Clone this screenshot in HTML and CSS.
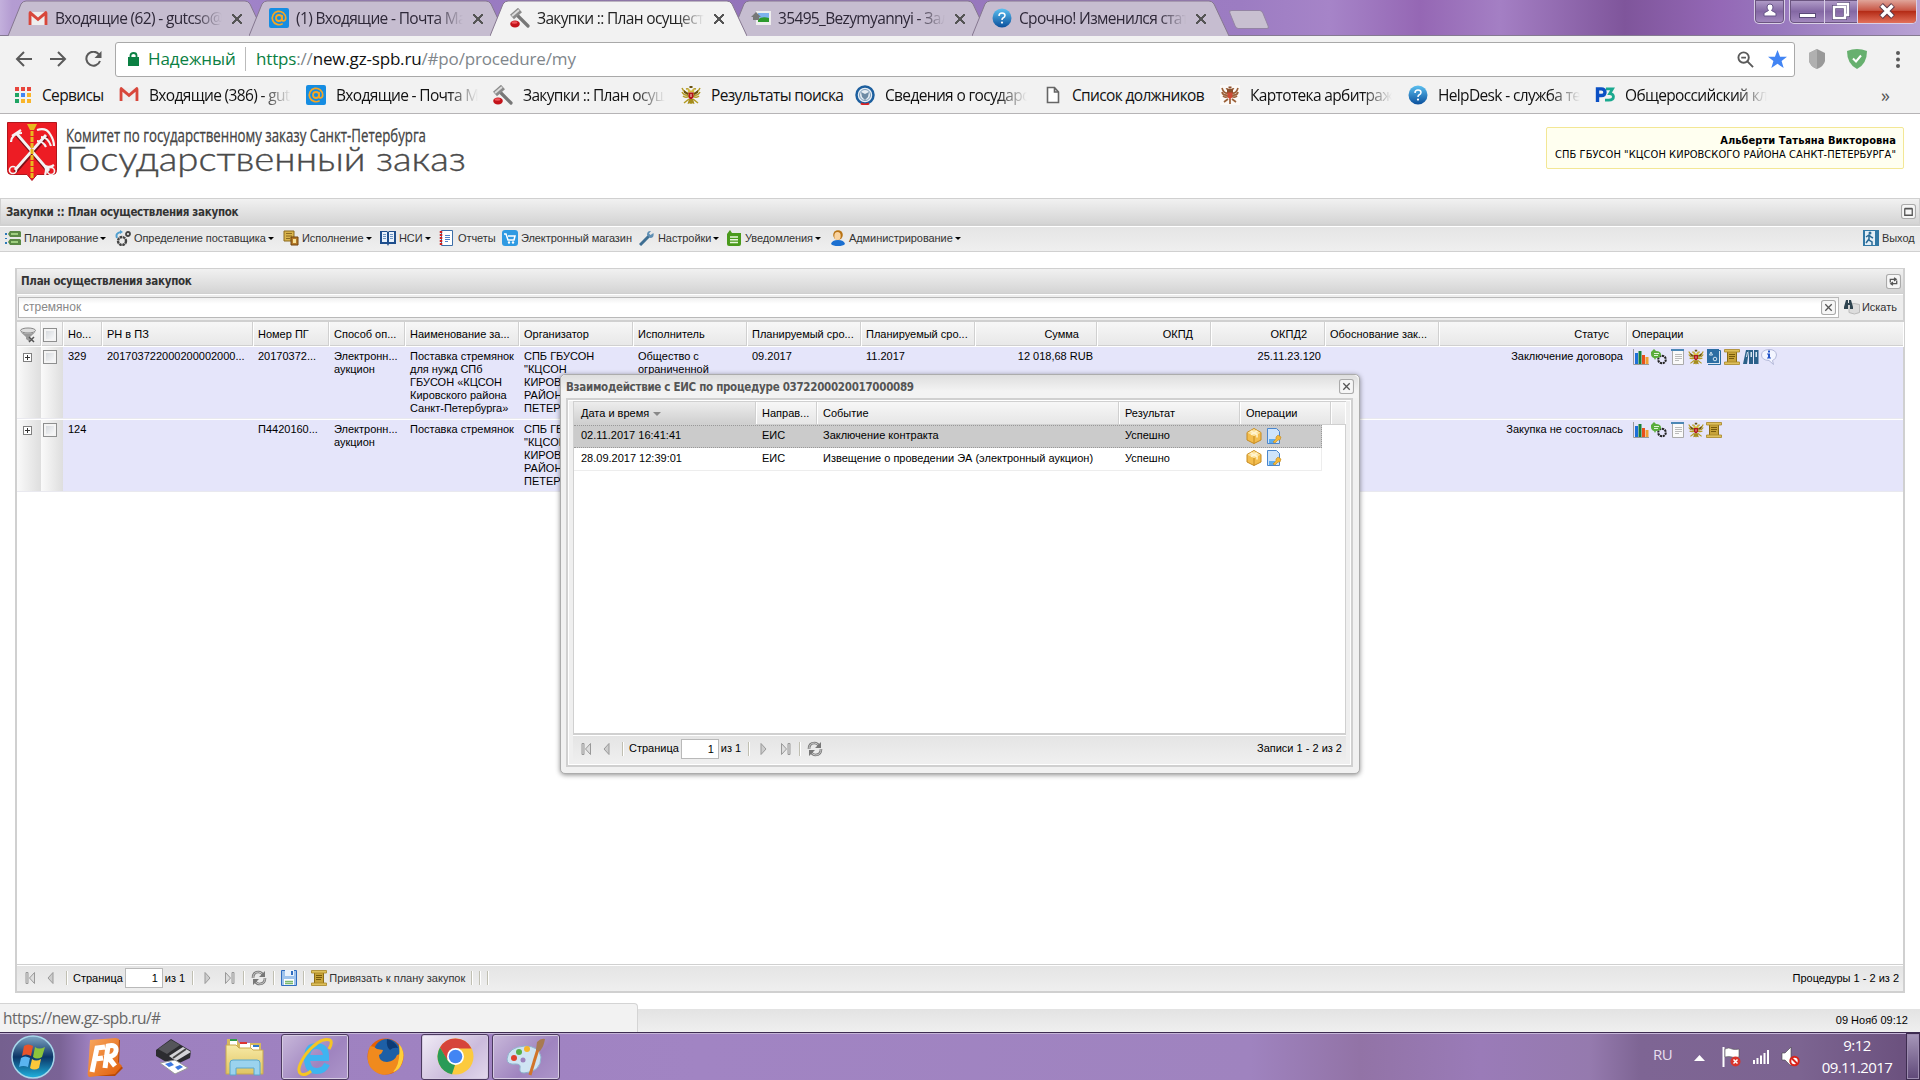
FILE: index.html
```html
<!DOCTYPE html>
<html lang="ru">
<head>
    <meta charset="UTF-8">
    <title>Закупки :: План осуществления закупок</title>
    <link rel="stylesheet" href="styles.css">
</head>
<body>
    <!-- Icon set -->
    <svg class="sprite" width="0" height="0">
        <linearGradient id="gBlue" x2="0" y2="1"><stop offset="0" stop-color="#5cc0f0"/><stop offset="1" stop-color="#0a4f9c"/></linearGradient>
        <linearGradient id="gOrb" x2="0" y2="1"><stop offset="0" stop-color="#7fa6c4"/><stop offset=".5" stop-color="#0c3566"/><stop offset="1" stop-color="#1fb4e0"/></linearGradient>
        <linearGradient id="gOrange" x2="1" y2="1"><stop offset="0" stop-color="#f8a860"/><stop offset="1" stop-color="#e05c08"/></linearGradient>
        <linearGradient id="gGold" x2="0" y2="1"><stop offset="0" stop-color="#f7eaa6"/><stop offset="1" stop-color="#e0c463"/></linearGradient>
        <symbol id="gmail" viewBox="0 0 20 16"><path fill="#eee" d="M1 1h18v14H1z"/><path fill="#d8473b" d="M0 2q0-2 2-2l8 7 8-7q2 0 2 2v13h-3V5l-7 6-7-6v10H0z"/></symbol>
        <symbol id="mailru" viewBox="0 0 20 20"><rect width="20" height="20" rx="2" fill="#168de2"/><circle cx="10" cy="10" r="3" fill="none" stroke="#f6a623" stroke-width="1.8"/><path d="M13 7v4q0 2 1.700 2 2-.5 2-3a6.700 6.700 0 1 0-3 5.600" fill="none" stroke="#f6a623" stroke-width="1.700"/></symbol>
        <symbol id="gavel" viewBox="0 0 20 20"><path d="M8 8l10 10" stroke="#777" stroke-width="3.200" stroke-linecap="round"/><path d="M2 9l8-7" stroke="#8b8b8b" stroke-width="6"/><path d="M2 8l7-6" stroke="#ddd" stroke-width="2"/><ellipse cx="5" cy="16" rx="4.800" ry="3.400" fill="#c3131a"/><ellipse cx="4.500" cy="14.500" rx="3" ry="1.200" fill="#f0555a"/></symbol>
        <symbol id="photo" viewBox="0 0 20 16"><rect x="5" y="1" width="15" height="14" fill="#eee"/><rect x="7" y="3" width="11" height="5" fill="#7db2ee"/><path d="M7 9q5-3 11-1v4H7z" fill="#2d9b2d"/><path d="M0 7l5-5 5 5H8v3H2V7z" fill="#777"/></symbol>
        <symbol id="help" viewBox="0 0 20 20"><circle cx="10" cy="10" r="9.500" fill="url(#gBlue)"/><path d="M7 8q0-3 3-3t3 2.500q0 1.500-2 2.500-1 .5-1 2" fill="none" stroke="#fff" stroke-width="1.500"/><circle cx="10" cy="14.600" r="1.100" fill="#fff"/></symbol>
        <symbol id="eagle" viewBox="0 0 20 20"><path fill="none" stroke="#b39a22" stroke-width="1.500" d="M8 8Q4 9 1 3M8 10Q3 11 1 7M8 11.500Q4 13 2 11M12 8q4 1 7-5M12 10q5 1 7-3M12 11.500q4 1.500 6-.5M8 14l-5 4M12 14l5 4M10 14v5M8 6Q8 3 5 4M12 6q0-3 3-2"/><path fill="#6b5310" d="M8.500 1h3v2h-3zM3 5l4 3v2L3 8zM17 5l-4 3v2l4-2z"/><path fill="#d4bb40" d="M6.500 3.500l3 2h1l3-2-.5 4H7z"/><path fill="#b3151b" d="M7.500 7.500h5v4.500q-1 2-2.500 2.500Q8 14 7.500 12z"/><path fill="#f0e0d0" d="M9.500 9h1v3h-1z"/><path fill="#a58c1c" d="M8 14h4l1.500 5-3.500-1-3.500 1z"/></symbol>
        <symbol id="eaglered" viewBox="0 0 20 20"><path fill="#fbf9f7" d="M0 0h20v20H0z"/><path fill="none" stroke="#9b6038" stroke-width="1.700" d="M8 8Q4 9 2 3M8 10Q3 11 2 7M8 11.500Q5 13 3 11M12 8q4 1 6-5M12 10q5 1 6-3M12 11.500q3 1.500 5-.5M8 14l-4 3M12 14l4 3M10 14v5M8 6Q8 3 6 4M12 6q0-3 2-2"/><path fill="#8c4f2c" d="M8.500 1.500h3v2h-3zM7 4h6v4H7z"/><path fill="#cf4a35" d="M7.500 7.500h5v4.500L10 14.500 7.500 12z"/></symbol>
        <symbol id="fns" viewBox="0 0 20 20"><circle cx="10" cy="10" r="8.500" fill="#e8eef4" stroke="#1d5f9e" stroke-width="2.500"/><circle cx="10" cy="10" r="5.500" fill="none" stroke="#7b9dbb"/><path d="M6 7l4 2 4-2-1 5-3 3-3-3z" fill="#6e8ba5"/><path d="M6 18.500q4 2 8 0" stroke="#d22" stroke-width="2" fill="none"/></symbol>
        <symbol id="file" viewBox="0 0 14 18"><path d="M1.500 1.500h7l4 4.500v10.500h-11zM8.500 1.500V6h4" fill="#fff" stroke="#666" stroke-width="1.600"/></symbol>
        <symbol id="rz" viewBox="0 0 20 16"><path d="M2 16V2h4q4 0 4 3.500T6 9H3" fill="none" stroke="#0b50c4" stroke-width="3.600"/><path d="M11 2h7l-3 5q4 0 4 3.500T14 14h-4" fill="none" stroke="#1aa98f" stroke-width="3"/></symbol>
        <symbol id="plan" viewBox="0 0 16 16"><path fill="#5b8a45" d="M5 1h10l1 1v5H5L3 4zM5 9h10l1 1v5H5l-2-3z"/><path fill="#9fcf80" d="M6 3h7v2H6zM6 11h7v2H6z"/><path fill="#2b79b8" d="M0 3h2v2H0zM0 8h2v1H0zM0 12h2v2H0z"/></symbol>
        <symbol id="gears" viewBox="0 0 16 16"><circle cx="7" cy="11" r="4" fill="none" stroke="#444" stroke-width="2.400" stroke-dasharray="2.600 .6"/><circle cx="13" cy="4" r="2" fill="none" stroke="#444" stroke-width="1.800"/><path d="M2 8Q0 3 6 2" fill="none" stroke="#4f9fd0" stroke-width="2"/><path d="M5 0l3 2-3 2z" fill="#4f9fd0"/></symbol>
        <symbol id="exec" viewBox="0 0 16 16"><path fill="#d9b44c" stroke="#8c6a1f" d="M1 1h10v10H1z"/><path stroke="#8c6a1f" d="M3 3.500h6M3 6h6M3 8.500h4"/><path fill="#b57a28" stroke="#70430e" d="M8 7h7v8H8z"/><path fill="#f7e29b" d="M10 9h3v4h-3z"/></symbol>
        <symbol id="book" viewBox="0 0 16 16"><path fill="#1e4e8c" d="M0 1h7l1 1 1-1h7v13H9l-1 2-1-2H0z"/><path fill="#e8f1fb" d="M2 2h5v10H2zM9 2h5v10H9z"/><path stroke="#6e95c2" d="M3 4.500h3M3 6.500h3M3 8.500h3M10 4.500h3M10 6.500h3M10 8.500h3"/></symbol>
        <symbol id="report" viewBox="0 0 16 16"><path fill="#fff" stroke="#3c6ea8" d="M2.500.5h11v15h-11z"/><path stroke="#c22" stroke-width="2.500" stroke-dasharray="2 1" d="M2 1v14"/><path stroke="#4d82c8" d="M6 5.500h5M6 7.500h5M6 9.500h5M6 11.500h3"/></symbol>
        <symbol id="cart" viewBox="0 0 16 16"><rect width="16" height="16" rx="3" fill="#2f9ae2"/><path d="M2 4h2l2 6h6l1-4H6" fill="none" stroke="#fff" stroke-width="1.500"/><circle cx="7" cy="12.500" r="1.200" fill="#fff"/><circle cx="11" cy="12.500" r="1.200" fill="#fff"/></symbol>
        <symbol id="wrench" viewBox="0 0 16 16"><path d="M1 15l9-9" stroke="#3f6f93" stroke-width="3"/><path d="M14.500 3l-3 2-1.500-1.500L12 1q-4-.5-4 4l3 3q4.500 0 3.500-5z" fill="#5f8fb4"/></symbol>
        <symbol id="note" viewBox="0 0 16 16"><path fill="#4a9a1c" d="M1 4l3-4 2 3h9v11q0 2-2 2H3q-2 0-2-2z"/><path stroke="#e9f7dd" stroke-width="1.500" d="M4 7h8M4 9.700h8M4 12.400h8"/></symbol>
        <symbol id="admin" viewBox="0 0 16 16"><path fill="#1b6fd0" d="M1 14q1-4 7-4t7 4q-2 2-7 2t-7-2z"/><circle cx="8" cy="5" r="4.800" fill="#b87315"/><ellipse cx="7.500" cy="6" rx="3.200" ry="4" fill="#f9d3a0"/></symbol>
        <symbol id="exit" viewBox="0 0 16 16"><path fill="#3278a5" d="M0 0h16v16H0z"/><path fill="#e3eef6" d="M2 1h10v14H2z"/><circle cx="7" cy="3" r="1.500" fill="#2a6a95"/><path d="M3 7l3-2 2 2 2 1M6 5v5l3 2v3M6 9l-3 4" fill="none" stroke="#2a6a95" stroke-width="1.500"/></symbol>
        <symbol id="chart" viewBox="0 0 16 16"><path stroke="#999" fill="none" d="M.5 0v15.500H16"/><path fill="#1d6fd8" d="M2 4h3v11H2z"/><path fill="#188038" d="M5.500 2h3v13h-3z"/><path fill="#e8501a" d="M9 6h3v9H9z"/><path fill="#f0a030" d="M12.500 8h3v7h-3z"/></symbol>
        <symbol id="msggear" viewBox="0 0 16 16"><circle cx="11" cy="10.500" r="3.800" fill="none" stroke="#222" stroke-width="2" stroke-dasharray="2.200 .7"/><path fill="#5aad3c" d="M0 3l3-3 2 2q5 0 5 3.500T5 9l-1 2-1-2Q0 8 0 5z"/><path d="M3 4.500h5M3 6.500h4" stroke="#dff3d5"/></symbol>
        <symbol id="doc" viewBox="0 0 16 16"><path fill="#fafafa" stroke="#aaa" d="M2.500.5h11v15h-11z"/><path stroke="#4b86b5" stroke-width="2" d="M1 1h13"/><path stroke="#bbb" d="M5 5.500h7M5 7.500h7M5 9.500h7M5 11.500h4"/></symbol>
        <symbol id="bluebook" viewBox="0 0 16 16"><path fill="#dde8f2" stroke="#2c6ea3" d="M12 1.500h2.500v14H2"/><path fill="#2c6ea3" d="M1 0h12v14H1z"/><path d="M3.500 6L5 3l1.500 3z" fill="none" stroke="#cfe2f0"/><circle cx="9" cy="10" r="1.800" fill="none" stroke="#cfe2f0"/></symbol>
        <symbol id="scroll" viewBox="0 0 16 16"><path fill="#c7a339" stroke="#8b6c14" d="M3.500 2h9v12h-9z"/><path fill="#dfc15c" stroke="#a78526" stroke-width=".8" d="M.5.500h15v2.500H.5zM.5 13h15v2.500H.5z"/><path stroke="#775a0c" d="M5 5.500h6M5 7.500h6M5 9.500h5"/></symbol>
        <symbol id="folders" viewBox="0 0 16 16"><path fill="#2b6189" d="M3 1l3 0-2 14H0zM6 1h4v14H6zM11 1h4.500v14H11z"/><path fill="#d8e8f2" d="M4 3h1L4 8H3zM7.500 3h1.500v5H7.500zM12.500 3H14v5h-1.500z"/></symbol>
        <symbol id="info" viewBox="0 0 16 16"><path fill="#f3f5ff" stroke="#b3b8d8" d="M8 .5q7 0 7.500 5.500 0 4-4 5.500l1 4-4.500-4Q.5 11 .5 6T8 .5z"/><path fill="#2455c8" d="M7 1.500h2v2H7zM6 4.500h3v4h1v1H6v-1h1v-3H6z"/></symbol>
        <symbol id="box" viewBox="0 0 16 16"><path fill="#f3bd4e" stroke="#c58a20" d="M8 .5l7 4v7.500l-7 3.500-7-3.500V4.500z"/><path fill="#fce29a" d="M8 1l6.500 3.700L8 8.200 1.500 4.700z"/><path stroke="#c58a20" d="M8 8v7.500"/><path stroke="#fff3d0" stroke-width="1.500" d="M4.500 3l6.500 3.500v3M11.500 3L5 6.500" fill="none"/></symbol>
        <symbol id="docsign" viewBox="0 0 16 16"><path fill="#cfe4fa" stroke="#4a86cc" d="M1.500.5h9l3 3v12h-12z"/><path stroke="#3a9ae8" stroke-width="1.500" d="M3 12h6M3 14h5"/><path fill="#f2b83a" stroke="#c58715" stroke-width=".6" d="M7 14l3-3V9l2-2 3 2-1 3-2 0-3 3z"/></symbol>
        <symbol id="reload" viewBox="0 0 16 16"><path d="M2 8q0-6 5.500-6 3 0 4.500 3M14 8q0 6-5.500 6-3 0-4.500-3" fill="none" stroke="#777" stroke-width="2.600"/><path d="M2 8q0-6 5.500-6 3 0 4.500 3M14 8q0 6-5.500 6-3 0-4.500-3" fill="none" stroke="#ccc"/><path d="M14 1v6H8zM2 15V9h6z" fill="#777"/></symbol>
        <symbol id="save" viewBox="0 0 16 16"><rect width="16" height="16" rx="1" fill="#2f6cc0"/><path fill="#9fc3ec" d="M1 1h14v14H1z"/><path fill="#eaf2fb" d="M4 0h9v6H4z"/><path fill="#2f6cc0" d="M10 1h2v4h-2z"/><path fill="#fff" d="M3 9h10v6H3z"/><path stroke="#7cb86c" stroke-width="1.500" d="M4 11.500h8M4 13.500h8"/></symbol>
        <symbol id="bino" viewBox="0 0 16 16"><path fill="#ddd" stroke="#bbb" d="M5 5.500q5-2 10.500 0v8q-5 3-10.500 0z"/><path fill="#2f4450" d="M0 8l2-7h2v3h1V1h2l2 7v2H6V6H4v4H0z"/></symbol>
        <symbol id="filter" viewBox="0 0 16 16"><ellipse cx="8" cy="3.500" rx="7.500" ry="2.500" fill="#ddd" stroke="#888"/><path fill="#999" d="M.5 5q7 3 15 0L10 10v5l-4-3v-2z"/><path stroke="#555" stroke-width="1.500" d="M9 10l5 5M14 10l-5 5"/></symbol>
        <symbol id="first" viewBox="0 0 10 12"><path fill="#ddd" stroke="#999" d="M.5.500h2v11h-2zM9 .5v11L4 6z"/></symbol>
        <symbol id="prev" viewBox="0 0 7 12"><path fill="#ccc" stroke="#999" d="M6 .5v11L1 6z"/></symbol>
        <symbol id="next" viewBox="0 0 7 12"><path fill="#ccc" stroke="#999" d="M1 .5v11L6 6z"/></symbol>
        <symbol id="last" viewBox="0 0 10 12"><path fill="#ddd" stroke="#999" d="M7.500.5h2v11h-2zM1 .5v11L6 6z"/></symbol>
        <symbol id="tabshape" viewBox="0 0 257 36"><path d="M0 36L13 4q2-3 5-3H237q3 0 5 3l15 32"/></symbol>
    </svg>

    <div class="tabstrip">
        <div class="tab">
            <svg class="tab-bg"><use href="#tabshape"/></svg>
            <svg class="tab-ico gm"><use href="#gmail"/></svg><span class="tab-title">Входящие (62) - gutcso@</span><span class="tab-x"></span>
        </div>
        <div class="tab">
            <svg class="tab-bg"><use href="#tabshape"/></svg>
            <svg class="tab-ico"><use href="#mailru"/></svg><span class="tab-title">(1) Входящие - Почта Ма</span><span class="tab-x"></span>
        </div>
        <div class="tab active">
            <svg class="tab-bg"><use href="#tabshape"/></svg>
            <svg class="tab-ico"><use href="#gavel"/></svg><span class="tab-title">Закупки :: План осущест</span><span class="tab-x"></span>
        </div>
        <div class="tab">
            <svg class="tab-bg"><use href="#tabshape"/></svg>
            <svg class="tab-ico"><use href="#photo"/></svg><span class="tab-title">35495_Bezymyannyi - Зал</span><span class="tab-x"></span>
        </div>
        <div class="tab">
            <svg class="tab-bg"><use href="#tabshape"/></svg>
            <svg class="tab-ico"><use href="#help"/></svg><span class="tab-title">Срочно! Изменился стат</span><span class="tab-x"></span>
        </div>
        <div class="newtab"></div>
        <div class="caps">
            <div class="cap-user"><svg width="14" height="14" viewBox="0 0 14 14"><path fill="#fff" stroke="#665588" d="M7 1q3 0 3 3 0 2-1.500 3.500L13 10v3H1v-3l4.500-2.500Q4 6 4 4q0-3 3-3z"/></svg></div>
            <div class="cap-group">
                <div class="cap-min"><i></i></div>
                <div class="cap-max"><svg width="18" height="18" viewBox="0 0 18 18"><path d="M5 2h11v11h-3M2 5h11v11H2z" fill="none" stroke="#5a4a78" stroke-width="4"/><path d="M5 2h11v11h-3M2 5h11v11H2z" fill="none" stroke="#fff" stroke-width="2.500"/></svg></div>
                <div class="cap-close"><svg width="18" height="16" viewBox="0 0 18 16"><path d="M3 2l12 12M15 2L3 14" stroke="#5c3a48" stroke-width="5.500"/><path d="M3.500 2.500l11 11M14.500 2.500l-11 11" stroke="#fff" stroke-width="3.500"/></svg></div>
            </div>
        </div>
    </div>

    <div class="toolbar">
        <svg class="nav" viewBox="0 0 17 16"><path d="M17 8H2M9 1L2 8l7 7"/></svg>
        <svg class="nav" viewBox="0 0 17 16"><path d="M0 8h15M8 1l7 7-7 7"/></svg>
        <svg class="nav" viewBox="0 0 17 16"><path d="M14 3.500A7 7 0 1 0 15 10"/><path class="fill" d="M16.500 0v7h-7z"/></svg>
        <div class="omnibox">
            <svg width="11" height="14" viewBox="0 0 11 14"><path fill="#0b8043" d="M0 5h11v9H0z"/><path d="M2.500 6V3.500q0-2.500 3-2.500t3 2.500V6" fill="none" stroke="#0b8043" stroke-width="1.800"/></svg>
            <span class="secure">Надежный</span>
            <span class="url"><b>https</b>://<i>new.gz-spb.ru</i>/#po/procedure/my</span>
            <svg class="zoomico" viewBox="0 0 18 18"><circle cx="7" cy="7" r="5.500" fill="none" stroke="#5a5a5a" stroke-width="2"/><path d="M4.500 7h5M11 11l6 6" stroke="#5a5a5a" stroke-width="2"/></svg>
            <svg class="star" viewBox="0 0 20 20"><path fill="#4285f4" d="M10 0l2.700 7H20l-5.700 4.500L16.500 19 10 14.600 3.500 19l2.200-7.500L0 7h7.300z"/></svg>
        </div>
        <svg class="shield-gray" viewBox="0 0 16 20"><path fill="#999" d="M8 0l8 4v8q-1 5-8 8-7-3-8-8V4z"/><path fill="#b0b0b0" d="M8 0v20q-7-3-8-8V4z"/></svg>
        <svg class="shield" viewBox="0 0 20 20"><path fill="#67b06f" d="M10 0q5 0 10 2 0 13-10 18Q0 15 0 2q5-2 10-2z"/><path d="M6 9.500l3 3 5-6" fill="none" stroke="#fff" stroke-width="2"/></svg>
        <svg class="dots" viewBox="0 0 4 17"><circle cx="2" cy="2" r="2"/><circle cx="2" cy="8.500" r="2"/><circle cx="2" cy="15" r="2"/></svg>
    </div>

    <div class="bookmarks">
        <div><svg class="apps" viewBox="0 0 16 16"><path fill="#e8453c" d="M0 0h4v4H0zM6 0h4v4H6zM12 0h4v4h-4z"/><path fill="#1fa463" d="M0 6h4v4H0z"/><path fill="#4285f4" d="M6 6h4v4H6z"/><path fill="#f9b52a" d="M12 6h4v4h-4zM6 12h4v4H6zM12 12h4v4h-4z"/><path fill="#1fa463" d="M0 12h4v4H0z"/></svg><span class="full">Сервисы</span></div>
        <div><svg class="gm"><use href="#gmail"/></svg><span>Входящие (386) - gutc</span></div>
        <div><svg><use href="#mailru"/></svg><span>Входящие - Почта Ма</span></div>
        <div><svg><use href="#gavel"/></svg><span>Закупки :: План осущ</span></div>
        <div><svg><use href="#eagle"/></svg><span class="full">Результаты поиска</span></div>
        <div><svg><use href="#fns"/></svg><span>Сведения о государс</span></div>
        <div><svg class="fl"><use href="#file"/></svg><span class="full">Список должников</span></div>
        <div><svg><use href="#eaglered"/></svg><span>Картотека арбитраж</span></div>
        <div><svg><use href="#help"/></svg><span>HelpDesk - служба тех</span></div>
        <div><svg class="gm"><use href="#rz"/></svg><span>Общероссийский кла</span></div>
        <div class="more">»</div>
    </div>

    <div class="header">
        <svg class="logo" width="480" height="70" viewBox="0 0 480 70">
            <g transform="translate(0 1)">
                <path fill="#ed1c24" stroke="#b3151b" d="M7.500 7.500h49v48q0 4-4 4H37l-5 6-5-6H11.500q-4 0-4-4z"/>
                <path d="M15 57L47 21M49 57L17 20" stroke="#801018" stroke-width="4"/>
                <path d="M15 55L46 20M49 56L17 19" stroke="#f4f4f4" stroke-width="2.800"/>
                <path d="M11 27q1-9 11-9M12 21l9-6M37 15q9-3 13 4 4 6 4 12M41 22q7 0 10 9M37 26q6 0 9 6M45 60q2-5 0-9 5 2 9-1" fill="none" stroke="#f4f4f4" stroke-width="2.200"/>
                <circle cx="13" cy="55" r="3.500" fill="none" stroke="#f4f4f4" stroke-width="1.600"/><circle cx="51" cy="56" r="3.500" fill="none" stroke="#f4f4f4" stroke-width="1.600"/>
                <path d="M32 10v54" stroke="#e8b91e" stroke-width="3" stroke-dasharray="5 1"/><path fill="#e8b91e" d="M27 9h10l-3 6h-4z"/>
            </g>
            <text class="l1" x="66" y="28" textLength="360" lengthAdjust="spacingAndGlyphs">Комитет по государственному заказу Санкт-Петербурга</text>
            <text class="l2" x="65" y="57" textLength="401" lengthAdjust="spacingAndGlyphs">Государственный заказ</text>
        </svg>
        <div class="userbox"><b>Альберти Татьяна Викторовна</b><span>СПБ ГБУСОН "КЦСОН КИРОВСКОГО РАЙОНА САНКТ-ПЕТЕРБУРГА"</span></div>
    </div>

    <div class="titlebar"><span>Закупки :: План осуществления закупок</span><svg class="tool" viewBox="0 0 14 14"><rect x=".5" y=".5" width="13" height="13" rx="2"/><path d="M3.500 4.500h7v6h-7zM3.500 4h7" class="s"/></svg></div>

    <div class="menu">
        <div><svg><use href="#plan"/></svg>Планирование<i></i></div>
        <div><svg><use href="#gears"/></svg>Определение поставщика<i></i></div>
        <div><svg><use href="#exec"/></svg>Исполнение<i></i></div>
        <div><svg><use href="#book"/></svg>НСИ<i></i></div>
        <div><svg><use href="#report"/></svg>Отчеты</div>
        <div><svg><use href="#cart"/></svg>Электронный магазин</div>
        <div><svg><use href="#wrench"/></svg>Настройки<i></i></div>
        <div><svg><use href="#note"/></svg>Уведомления<i></i></div>
        <div><svg><use href="#admin"/></svg>Администрирование<i></i></div>
        <div class="exit"><svg><use href="#exit"/></svg>Выход</div>
    </div>

    <div class="workspace">
        <div class="panel">
            <div class="panel-head"><span>План осуществления закупок</span><svg class="tool" viewBox="0 0 14 14"><rect x=".5" y=".5" width="13" height="13" rx="2"/><path d="M4 8V5h5M7.500 3.500L9.500 5l-2 1.500M10 6v3H5M6.500 7.500L4.500 9l2 1.500" class="s"/></svg></div>
            <div class="search">
                <div class="search-input"><span>стремянок</span><svg class="tool" viewBox="0 0 14 14"><rect x=".5" y=".5" width="13" height="13" rx="2"/><path d="M4 4l6 6M10 4l-6 6" class="s"/></svg></div>
                <svg class="i16"><use href="#bino"/></svg><span>Искать</span>
            </div>
            <div class="grid-head cols">
                <div class="ico"><svg class="i16"><use href="#filter"/></svg></div><div class="ico"><i class="chk"></i></div><div>Но...</div><div>РН в ПЗ</div><div>Номер ПГ</div><div>Способ оп...</div><div>Наименование за...</div><div>Организатор</div><div>Исполнитель</div><div>Планируемый сро...</div><div>Планируемый сро...</div><div class="r">Сумма</div><div class="r">ОКПД</div><div class="r">ОКПД2</div><div>Обоснование зак...</div><div class="r">Статус</div><div>Операции</div>
            </div>
            <div class="row cols">
                <div class="side"><i class="plus"></i></div><div class="side"><i class="chk"></i></div>
                <div>329</div><div>201703722000200002000...</div><div>20170372...</div><div>Электронн...<br>аукцион</div>
                <div>Поставка стремянок<br>для нужд СПб<br>ГБУСОН «КЦСОН<br>Кировского района<br>Санкт-Петербурга»</div>
                <div>СПБ ГБУСОН<br>"КЦСОН<br>КИРОВСКОГО<br>РАЙОНА<br>ПЕТЕРБУРГА"</div><div>Общество с<br>ограниченной</div>
                <div>09.2017</div><div>11.2017</div><div class="r">12 018,68 RUB</div><div></div><div class="r">25.11.23.120</div><div></div><div class="r">Заключение договора</div>
                <div class="ops"><svg><use href="#chart"/></svg><svg><use href="#msggear"/></svg><svg><use href="#doc"/></svg><svg><use href="#eagle"/></svg><svg><use href="#bluebook"/></svg><svg><use href="#scroll"/></svg><svg><use href="#folders"/></svg><svg><use href="#info"/></svg></div>
            </div>
            <div class="row cols">
                <div class="side"><i class="plus"></i></div><div class="side"><i class="chk"></i></div>
                <div>124</div><div></div><div>П4420160...</div><div>Электронн...<br>аукцион</div><div>Поставка стремянок</div>
                <div>СПБ ГБУСОН<br>"КЦСОН<br>КИРОВСКОГО<br>РАЙОНА<br>ПЕТЕРБУРГА"</div><div></div>
                <div></div><div></div><div></div><div></div><div></div><div></div><div class="r">Закупка не состоялась</div>
                <div class="ops"><svg><use href="#chart"/></svg><svg><use href="#msggear"/></svg><svg><use href="#doc"/></svg><svg><use href="#eagle"/></svg><svg><use href="#scroll"/></svg></div>
            </div>
            <div class="fill"></div>
            <div class="pager">
                <svg class="p10"><use href="#first"/></svg><svg class="p7"><use href="#prev"/></svg><i></i>
                <span>Страница</span><b>1</b><span>из 1</span><i></i>
                <svg class="p7"><use href="#next"/></svg><svg class="p10"><use href="#last"/></svg><i></i>
                <svg class="i16"><use href="#reload"/></svg><i></i><svg class="i16"><use href="#save"/></svg><i></i>
                <svg class="i16"><use href="#scroll"/></svg><span class="bind">Привязать к плану закупок</span><i class="t"></i><i class="t"></i><i class="t"></i>
                <span class="total">Процедуры 1 - 2 из 2</span>
            </div>
        </div>
    </div>

    <div class="statusbar">09 Нояб 09:12</div>

    <div class="taskbar">
        <div class="start"><svg width="44" height="44" viewBox="0 0 44 44"><circle cx="22" cy="22" r="21" fill="url(#gOrb)" stroke="#a7d6ea" stroke-width="1.500"/><path fill="#e8542a" d="M13 11q4-3 9 0l-2 10q-5-3-9 0z"/><path fill="#8cc43c" d="M24 12q4 3 10 0l-3 10q-5 3-9 0z"/><path fill="#5ab4f0" d="M10 23q4-3 9 0l-2 9q-5-2-9 0z"/><path fill="#fcc83a" d="M21 24q4 3 9 0l-2 9q-5 3-9 0z"/></svg></div>
        <div class="task"><svg width="37" height="40" viewBox="0 0 37 40"><path fill="#b84a08" d="M6 3h28l-1 24 4 4-8 8H4z"/><path fill="url(#gOrange)" d="M4 3l26-2 3 1-1 23 4 4-7 8-26 3Q1 38 2 34z"/><path d="M6 35L11 11l8-1M9 22l8-1M19 31l3-22q9-2 8 5-1 5-8 6l7 9" fill="none" stroke="#fff" stroke-width="5"/></svg></div>
        <div class="task"><svg width="38" height="38" viewBox="0 0 38 38"><path fill="#2c2c30" d="M1 12L16 1l20 12-1 7-17 8L1 18z"/><path fill="#55555a" d="M3 11L16 2l9 5-13 9z"/><path fill="#d4d4d8" d="M14 18L28 9l8 5-15 9z"/><path stroke="#444" stroke-width="2" d="M18 20l13-9"/><path fill="#fff" stroke="#999" d="M5 25l15-3 13 8-13 6z"/><path fill="#3c78e0" d="M10 26l6-2 3 3-5 2zM20 29l5-2 3 2-5 3z"/></svg></div>
        <div class="task"><svg width="40" height="40" viewBox="0 0 40 40"><path fill="#d7b95e" d="M2 2h10l2 4h22v10H2z"/><path fill="#fff" d="M5 3h7v5H5zM15 6h10v5H15zM26 8h8v5h-8z"/><path fill="#2f9b4a" d="M5 2h7v2H5z"/><path fill="#d33" d="M15 5h7v2h-7z"/><path fill="#2f78c8" d="M28 8h6v2h-6z"/><path fill="url(#gGold)" stroke="#c9a94e" d="M1 8h10l3 3h12l2 2h10v24H1z"/><path d="M5 38V26q0-3 3-3h24q3 0 3 3v12h-6v-7H11v7z" fill="#9bd3ee" stroke="#5ba7cc"/></svg></div>
        <div class="task open"><svg width="40" height="40" viewBox="0 0 40 40"><path d="M34 21H12q0-12 9.500-12T31 20M32 27q-3 7-10 7-10 0-10-13" fill="none" stroke="#3fb4f0" stroke-width="6"/><path d="M6 37Q0 33 11 17 25 0 35 3q3 2-1 9M6 37q4 2 10-3" fill="none" stroke="#f5c525" stroke-width="3"/></svg></div>
        <div class="task"><svg width="37" height="37" viewBox="0 0 37 37"><circle cx="18.500" cy="18.500" r="18" fill="#e66000"/><circle cx="20" cy="14" r="13" fill="#1d5fa6"/><path fill="#0d3b75" d="M20 1q8 2 11 9-5-1-8 2-4-3-3-11z"/><path fill="#f08a1d" d="M3 8q4 0 7 3l6 1q-1 4-4 5 0 7 8 7 8-1 10-7 5-1 6-5 2 15-9 22Q14 41 4 30-2 22 3 8z"/><path fill="#ffcf3a" d="M32 6q7 8 3 19-3 8-9 9 8-8 6-28z"/></svg></div>
        <div class="task open bright"><svg width="37" height="37" viewBox="0 0 37 37"><circle cx="18.500" cy="18.500" r="18" fill="#fcca3e"/><path fill="#d6443a" d="M18.500.5A18 18 0 0 1 34.500 10.500H18.500L10 22 3 9.500A18 18 0 0 1 18.500.5z"/><path fill="#2a9b57" d="M3 9.500L11 23l7 4-3 9.300A18 18 0 0 1 3 9.500z"/><circle cx="18.500" cy="18.500" r="8.500" fill="#fff"/><circle cx="18.500" cy="18.500" r="6.800" fill="#4285f4"/></svg></div>
        <div class="task open"><svg width="40" height="38" viewBox="0 0 40 38"><path fill="#cfe4f3" stroke="#8fb3cd" d="M19 8q14 0 16 11 0 15-17 16-5 0-4-5 1-4-4-4-9 1-9-5Q2 9 19 8z"/><circle cx="8" cy="20" r="3" fill="#e0412f"/><circle cx="13" cy="14" r="3" fill="#56b04a"/><circle cx="21" cy="11" r="3" fill="#f5b52c"/><circle cx="17" cy="22" r="2.500" fill="#9c82bd"/><path d="M32 11l-8 26" stroke="#d1752a" stroke-width="3"/><path fill="#a87a50" d="M30 12l1-8q4-4 8-3-1 7-5 12z"/></svg></div>
        <div class="tray">
            <span class="lang">RU</span>
            <svg class="up" width="11" height="6" viewBox="0 0 11 6"><path fill="#fff" d="M5.500 0L11 6H0z"/></svg>
            <svg class="flag" width="19" height="20" viewBox="0 0 19 20"><path d="M1.500 0v20" stroke="#fff" stroke-width="2"/><path fill="#fff" stroke="#555" stroke-width=".6" d="M3 2q4-2 7 0 3 1 7 0v8q-4 2-7 0-3-1-7 0z"/><circle cx="13.500" cy="14.500" r="5" fill="#d8342c"/><path d="M11.500 12.500l4 4m0-4l-4 4" stroke="#fff" stroke-width="1.500"/></svg>
            <svg class="net" width="17" height="14" viewBox="0 0 17 14"><path fill="#fff" d="M0 10h2v4H0zM3.500 8h2v6h-2zM7 5.500h2V14H7zM10.500 3h2v11h-2zM14 0h2v14h-2z"/></svg>
            <svg class="snd" width="19" height="20" viewBox="0 0 19 20"><path fill="#fff" stroke="#444" stroke-width=".6" d="M1 6h3l6-6v19l-6-6H1z"/><circle cx="13.500" cy="14" r="4.200" fill="#fff" stroke="#d8241c" stroke-width="2"/><path d="M10.500 11l6 6" stroke="#d8241c" stroke-width="2"/></svg>
            <div class="clock"><span>9:12</span><span>09.11.2017</span></div>
            <div class="desk"></div>
        </div>
    </div>

    <div class="linkhint">https://new.gz-spb.ru/#</div>

    <!-- EIS interaction window -->
    <div class="window">
        <div class="window-head"><span>Взаимодействие с ЕИС по процедуре 0372200020017000089</span><svg class="tool" viewBox="0 0 14 14"><rect x=".5" y=".5" width="13" height="13" rx="2"/><path d="M4 4l6 6M10 4l-6 6" class="s"/></svg></div>
        <div class="window-body">
            <div class="inner">
                <div class="w-head wcols"><div class="sorted">Дата и время <i></i></div><div>Направ...</div><div>Событие</div><div>Результат</div><div>Операции</div><div></div></div>
                <div class="w-row wcols sel"><div>02.11.2017 16:41:41</div><div>ЕИС</div><div>Заключение контракта</div><div>Успешно</div><div class="wops"><svg><use href="#box"/></svg><svg><use href="#docsign"/></svg></div></div>
                <div class="w-row wcols"><div>28.09.2017 12:39:01</div><div>ЕИС</div><div>Извещение о проведении ЭА (электронный аукцион)</div><div>Успешно</div><div class="wops"><svg><use href="#box"/></svg><svg><use href="#docsign"/></svg></div></div>
            </div>
            <div class="pager wpager">
                <svg class="p10"><use href="#first"/></svg><svg class="p7"><use href="#prev"/></svg><i></i>
                <span>Страница</span><b>1</b><span>из 1</span><i></i>
                <svg class="p7"><use href="#next"/></svg><svg class="p10"><use href="#last"/></svg><i></i>
                <svg class="i16"><use href="#reload"/></svg>
                <span class="total">Записи 1 - 2 из 2</span>
            </div>
        </div>
    </div>
</body>
</html>
```

FILE: styles.css
```css
* {
    box-sizing: border-box;
}

body {
    margin: 0;
    width: 1920px;
    height: 1080px;
    overflow: hidden;
    display: flex;
    flex-direction: column;
    position: relative;
    background: #fff;
    color: #000;
    font: 11px/13px "Liberation Sans", Arial, sans-serif;
}

svg {
    display: block;
    flex: none;
}

.sprite {
    position: absolute;
}

.i16 {
    width: 16px;
    height: 16px;
}

/* Browser tabs */
.tabstrip {
    height: 36px;
    flex: none;
    display: flex;
    padding-left: 8px;
    border-bottom: 1px solid #857a92;
    background: linear-gradient(90deg, #c3b0dc 0, #b49cd2 12px, #9f82c8 260px, #9373ba 760px, #9c7cc2 1240px, #a684c8 1330px, #9567b4 1420px, #a47fc4 1500px, #7f559b 1625px, #9468b6 1720px, #9878be 1780px, #b8a2d4 1920px);
}

.tab {
    width: 257px;
    height: 36px;
    margin-right: -16px;
    flex: none;
    display: flex;
    align-items: center;
    position: relative;
    padding: 0 0 0 20px;
    font: 15.5px/22px "Open Sans", "Noto Sans", sans-serif;
    color: #2e2838;
}

.tab-bg {
    position: absolute;
    left: 0;
    top: 0;
    width: 257px;
    height: 36px;
    fill: #c6bdd0;
    stroke: #85778f;
}

.tab.active {
    z-index: 2;
    color: #222;
}

.tab.active .tab-bg {
    fill: #f2f2f2;
}

.tab-ico {
    position: relative;
    width: 20px;
    height: 20px;
}

.tab-ico.gm {
    height: 15px;
}

.tab-title {
    position: relative;
    width: 167px;
    margin-left: 7px;
    overflow: hidden;
    white-space: nowrap;
    letter-spacing: -0.65px;
    -webkit-mask-image: linear-gradient(90deg, #000 140px, transparent 167px);
    mask-image: linear-gradient(90deg, #000 140px, transparent 167px);
}

.tab-x {
    position: relative;
    width: 10px;
    height: 10px;
    margin: 2px 0 0 10px;
    background:
        linear-gradient(45deg, transparent 44%, #555 44%, #555 56%, transparent 56%),
        linear-gradient(-45deg, transparent 44%, #555 44%, #555 56%, transparent 56%);
}

.newtab {
    width: 34px;
    height: 19px;
    margin: 10px 0 0 19px;
    transform: skewX(22deg);
    background: #c8c0d0;
    border: 1px solid #9484a4;
    border-radius: 3px;
}

.caps {
    display: flex;
    margin-left: auto;
    padding-right: 3px;
    gap: 4px;
}

.cap-user,
.cap-group {
    height: 24px;
    border: 1px solid #d9cfe6;
    border-top: 0;
    border-radius: 0 0 5px 5px;
    display: flex;
    justify-content: center;
    box-shadow: inset 0 0 0 1px #6b5580;
    background: linear-gradient(#b39fca, #8468a4 50%, #a48ac0);
    overflow: hidden;
}

.cap-user {
    width: 31px;
    padding-top: 3px;
}

.cap-group > div {
    height: 23px;
    display: flex;
    justify-content: center;
}

.cap-min {
    width: 35px;
    padding-top: 13px;
    border-right: 1px solid #d9cfe6;
}

.cap-min i {
    width: 17px;
    height: 5px;
    background: #fff;
    border: 1px solid #5a4a78;
}

.cap-max {
    width: 33px;
    padding-top: 2px;
    border-right: 1px solid #d9cfe6;
}

.cap-close {
    width: 58px;
    padding-top: 3px;
    background: linear-gradient(#e0a59a, #c85645 45%, #b52c17 50%, #e2705a);
}

/* Address bar */
.toolbar {
    height: 46px;
    flex: none;
    display: flex;
    align-items: center;
    background: #f2f2f2;
    padding-left: 15px;
}

.nav {
    width: 17px;
    height: 16px;
    margin-right: 18px;
    fill: none;
    stroke: #5a5a5a;
    stroke-width: 2;
}

.nav + .nav + .nav {
    margin-right: 13px;
}

.nav .fill {
    fill: #5a5a5a;
    stroke: none;
}

.omnibox {
    width: 1680px;
    height: 35px;
    display: flex;
    align-items: center;
    padding: 0 7px 0 12px;
    background: #fff;
    border: 1px solid #a9a9a9;
    border-radius: 3px;
    font: 17px/24px "Open Sans", "Noto Sans", sans-serif;
}

.secure {
    color: #0b8043;
    width: 98px;
    margin: 0 10px 0 9px;
    border-right: 1px solid #bbb;
    letter-spacing: -0.1px;
}

.url {
    color: #80868b;
    letter-spacing: -0.17px;
    flex: 1;
}

.url b {
    color: #0b8043;
    font-weight: normal;
}

.url i {
    color: #111;
    font-style: normal;
}

.zoomico {
    width: 17px;
    height: 17px;
    margin-right: 14px;
}

.star {
    width: 19px;
    height: 19px;
}

.shield-gray {
    width: 16px;
    height: 20px;
    margin-left: 14px;
}

.shield {
    width: 20px;
    height: 20px;
    margin-left: 22px;
}

.dots {
    width: 4px;
    height: 17px;
    margin-left: 29px;
    fill: #5a5a5a;
}

.bookmarks {
    height: 32px;
    flex: none;
    display: grid;
    grid-template-columns: 104px 187px 187px 188px 174px 188px 177px 188px 187px 286px 30px;
    padding: 0 0 6px 15px;
    background: #f2f2f2;
    border-bottom: 1px solid #b6b4b6;
    font: 15.5px/22px "Open Sans", "Noto Sans", sans-serif;
    color: #111;
}

.bookmarks div {
    display: flex;
    align-items: center;
}

.bookmarks svg {
    width: 20px;
    height: 20px;
    margin-right: 10px;
}

.bookmarks .gm {
    height: 15px;
}

.bookmarks .fl {
    width: 14px;
    height: 18px;
    margin: 0 12px 0 3px;
}

.bookmarks .apps {
    width: 16px;
    height: 16px;
    margin-right: 11px;
}

.bookmarks span {
    width: 142px;
    overflow: hidden;
    white-space: nowrap;
    letter-spacing: -0.65px;
    -webkit-mask-image: linear-gradient(90deg, #000 112px, transparent 142px);
    mask-image: linear-gradient(90deg, #000 112px, transparent 142px);
}

.bookmarks .full {
    -webkit-mask-image: none;
    mask-image: none;
}

.bookmarks .more {
    font-size: 18px;
    color: #555;
}

/* Site header */
.header {
    height: 84px;
    flex: none;
    display: flex;
    justify-content: space-between;
    align-items: flex-start;
    padding-right: 16px;
}

.logo .l1 {
    font: 18.5px "Open Sans", "Noto Sans", sans-serif;
    fill: #444;
    stroke: #444;
    stroke-width: 0.3px;
}

.logo .l2 {
    font: 300 33px Lato, "Open Sans", sans-serif;
    fill: #4a4a4a;
    stroke: #4a4a4a;
    stroke-width: 0.4px;
}

.userbox {
    width: 358px;
    height: 42px;
    margin-top: 13px;
    padding: 6px 7px 0 0;
    display: flex;
    flex-direction: column;
    align-items: flex-end;
    white-space: nowrap;
    border: 1px solid #f3e795;
    border-radius: 2px;
    background: #fffff0;
    font: 11px/14px "DejaVu Sans Condensed", "DejaVu Sans", sans-serif;
    letter-spacing: 0.06px;
}

.titlebar,
.panel-head {
    display: flex;
    justify-content: space-between;
    align-items: center;
    flex: none;
    font: bold 11.5px/14px "DejaVu Sans Condensed", "DejaVu Sans", sans-serif;
    letter-spacing: -0.3px;
    color: #333;
    background: linear-gradient(#f1f1f1, #d4d4d4);
    border: 1px solid #d0d0d0;
}

.titlebar {
    height: 28px;
    padding: 0 3px 0 5px;
    border-bottom: 2px solid #d0d0d0;
}

.tool {
    width: 15px;
    height: 15px;
}

.tool rect {
    fill: #f6f6f6;
    stroke: #aaa;
}

.tool .s {
    fill: none;
    stroke: #555;
    stroke-width: 1.2;
}

.menu {
    height: 26px;
    flex: none;
    display: grid;
    grid-template-columns: 110px 168px 97px 59px 63px 137px 87px 104px 1033px 1fr;
    padding: 0 0 2px 5px;
    color: #333;
    letter-spacing: -0.07px;
    background: linear-gradient(#e5e5e5, #efefef);
    border-top: 1px solid #fff;
    border-bottom: 1px solid #d0d0d0;
}

.menu div {
    display: flex;
    align-items: center;
    white-space: nowrap;
}

.menu svg {
    width: 16px;
    height: 16px;
    margin-right: 3px;
}

.menu i {
    margin-left: 2px;
    border: 3px solid transparent;
    border-top-color: #000;
    border-bottom: 0;
}

/* Procurement plan grid */
.workspace {
    flex: 1;
    min-height: 0;
    padding: 16px 15px 16px 15px;
}

.panel {
    height: 725px;
    display: flex;
    flex-direction: column;
    border: 2px solid #d0d0d0;
    border-top: 0;
}

.panel-head {
    height: 26px;
    margin: 0 -1px;
    padding: 0 2px 0 4px;
}

.search {
    height: 28px;
    flex: none;
    display: flex;
    align-items: center;
    padding: 0 6px 1px 1px;
    color: #333;
    background: #ededed;
    border-top: 1px solid #fff;
    border-bottom: 2px solid #d0d0d0;
}

.search-input {
    width: 1821px;
    height: 21px;
    margin-right: 5px;
    display: flex;
    justify-content: space-between;
    align-items: center;
    padding: 0 2px 0 4px;
    background: linear-gradient(#f1f1f1, #fff 6px);
    border: 1px solid #b9b9b9;
    color: #888;
    font-size: 12px;
}

.search > span {
    margin-left: 2px;
}

.cols {
    display: grid;
    grid-template-columns: 24px 22px 39px 151px 76px 76px 114px 114px 114px 114px 114px 122px 114px 114px 114px 188px 1fr;
    flex: none;
}

.grid-head {
    height: 24px;
    line-height: 25px;
    background: linear-gradient(#f7f7f7, #e8e8e8);
    border-bottom: 1px solid #d0d0d0;
}

.grid-head > div {
    padding-left: 5px;
    border-right: 1px solid #d0d0d0;
    box-shadow: 1px 0 #fff;
    white-space: nowrap;
}

.grid-head > div:last-child {
    border: 0;
}

.grid-head .r {
    text-align: right;
    padding-right: 17px;
}

.grid-head .ico {
    display: flex;
    align-items: center;
    padding: 0 0 0 3px;
}

.grid-head .ico + .ico {
    padding-left: 2px;
}

.chk {
    width: 14px;
    height: 14px;
    display: block;
    border: 1px solid #8e8f8f;
    background: linear-gradient(135deg, #cfd3d8, #fff);
    box-shadow: inset 0 0 0 2px #f4f4f4;
}

.row {
    height: 73px;
    background: #e5e5fa;
    border-top: 1px solid #fff;
    border-bottom: 1px solid #e9e9ef;
}

.row > div {
    padding: 3px 4px 0 5px;
    white-space: nowrap;
    overflow: hidden;
}

.row .r {
    text-align: right;
}

.row .side {
    display: flex;
    align-items: flex-start;
    padding: 3px 0 0 2px;
    background: linear-gradient(90deg, #fafafa, #dedede);
}

.plus {
    width: 9px;
    height: 9px;
    margin: 3px 0 0 4px;
    border: 1px solid #808080;
    background:
        linear-gradient(#333, #333) center/5px 1px no-repeat,
        linear-gradient(#333, #333) center/1px 5px no-repeat,
        #fff;
}

.row .ops {
    display: flex;
    gap: 2.3px;
    padding: 2px 0 0 6px;
}

.ops svg,
.wops svg {
    width: 16px;
    height: 16px;
}

.fill {
    flex: 1;
}

.pager {
    height: 27px;
    flex: none;
    display: flex;
    align-items: center;
    padding: 0 4px 0 8px;
    background: linear-gradient(#e4e4e4, #efefef);
    border-top: 1px solid #d0d0d0;
    box-shadow: inset 0 1px #fff;
}

.pager .p10 {
    width: 11px;
    height: 12px;
}

.pager .p7 {
    width: 7px;
    height: 12px;
    margin: 0 12px 0 11px;
}

.pager i {
    width: 2px;
    height: 14px;
    margin-right: 5px;
    background: linear-gradient(90deg, #c0bfb2 50%, #fff 50%);
}

.pager b {
    width: 38px;
    height: 20px;
    margin: 0 2px;
    padding-right: 4px;
    font-weight: normal;
    line-height: 18px;
    text-align: right;
    background: #fff;
    border: 1px solid #b9b9b9;
}

.pager b + span {
    margin-right: 7px;
}

.pager b ~ .p7 {
    margin: 0 13px 0 5px;
}

.pager b ~ .p10 {
    margin-right: 8px;
}

.pager .i16 {
    margin: 0 6px 0 1px;
}

.pager .bind {
    color: #333;
    margin: 0 6px 0 -4px;
}

.pager .t {
    margin-right: 6px;
}

.pager .total {
    margin-left: auto;
}

.statusbar {
    height: 23px;
    flex: none;
    padding: 5px 12px 0 0;
    text-align: right;
    background: linear-gradient(#e3e3e3, #efefef);
}

/* Link address shown over the page */
.linkhint {
    position: absolute;
    left: 0;
    top: 1003px;
    width: 638px;
    height: 29px;
    padding: 2px 0 0 3px;
    background: #f2f2f2;
    border: 1px solid #d4d4d4;
    border-width: 1px 1px 0 0;
    border-top-right-radius: 4px;
    font: 15.5px/24px "Open Sans", "Noto Sans", sans-serif;
    letter-spacing: -0.53px;
    color: #666;
}

/* Windows taskbar */
.taskbar {
    height: 48px;
    flex: none;
    display: flex;
    align-items: center;
    border-top: 1px solid #3d2c50;
    box-shadow: inset 0 1px #c4b4d6;
    background: linear-gradient(90deg, #75608f 0, #7a6396 60px, #9d80bf 90px, #a184c3 700px, #9f83bf 1250px, #9273a6 1360px, #9a7bb8 1480px, #957aae 1590px, #7e6594 1640px, #7c6491 1800px, #6c527f 1900px);
}

.start {
    width: 70px;
    padding-left: 11px;
}

.task {
    width: 68px;
    height: 46px;
    margin-right: 2.3px;
    display: flex;
    justify-content: center;
    align-items: center;
}

.task.open {
    border: 1px solid #4c3a60;
    border-radius: 3px;
    box-shadow: inset 0 0 0 1px #d6cbe2;
    background: linear-gradient(135deg, #c8b8da, #9f84bf 60%, #ad96ca);
}

.task.bright {
    background: linear-gradient(135deg, #f1ecf6, #cbbbdc 60%, #e2d8ec);
}

.tray {
    display: flex;
    align-items: center;
    height: 47px;
    margin-left: auto;
    color: #fff;
    font: 15px/22px "Open Sans", "Noto Sans", sans-serif;
    letter-spacing: -0.6px;
}

.lang {
    width: 41px;
    padding-bottom: 5px;
    color: #e6dfee;
}

.up {
    margin: 2px 17px 0 0;
}

.flag {
    margin-right: 12px;
}

.net {
    margin-right: 11px;
}

.snd {
    margin-right: 8px;
}

.clock {
    width: 98px;
    display: flex;
    flex-direction: column;
    align-items: center;
    padding-bottom: 2px;
}

.desk {
    width: 14px;
    height: 47px;
    border: 1px solid #3d2c50;
    background: linear-gradient(#a798ba, #5f4878);
    box-shadow: inset 0 0 0 1px #9d8cb0;
}

/* Modal window */
.window {
    position: absolute;
    left: 560px;
    top: 374px;
    width: 800px;
    height: 400px;
    display: flex;
    flex-direction: column;
    padding: 0 6px 6px 5px;
    background: #f1f1f1;
    border: 1px solid #acacac;
    border-radius: 5px;
    box-shadow: 0 1px 5px rgba(0, 0, 0, 0.45), inset 0 1px #fff;
}

.window-head {
    height: 23px;
    flex: none;
    display: flex;
    justify-content: space-between;
    align-items: center;
    margin: 0 -5px;
    padding: 0 4px 0 5px;
    border-radius: 5px 5px 0 0;
    background: linear-gradient(#dedede, #f3f3f3 70%);
    font: bold 11.5px/14px "DejaVu Sans Condensed", "DejaVu Sans", sans-serif;
    letter-spacing: -0.3px;
    color: #555;
}

.window-body {
    flex: 1;
    padding: 1px 5px 0 5px;
    border: 2px solid #d0d0d0;
    box-shadow: inset 0 0 0 1px #fff;
    background: #efefef;
}

.inner {
    height: 334px;
    border: 1px solid #d0d0d0;
    border-bottom-width: 2px;
    background: #fff;
}

.wcols {
    display: grid;
    grid-template-columns: 182px 61px 302px 121px 91px 1fr;
}

.w-head {
    height: 23px;
    line-height: 22px;
    background: linear-gradient(#f7f7f7, #e6e6e6);
    border-bottom: 1px solid #d0d0d0;
}

.w-head div {
    padding-left: 6px;
    border-right: 1px solid #d0d0d0;
    box-shadow: 1px 0 #fff;
}

.w-head div:last-child {
    border: 0;
}

.w-head .sorted {
    background: linear-gradient(#ededed, #cfcfcf);
}

.sorted i {
    display: inline-block;
    margin-left: 1px;
    vertical-align: 1px;
    border: 4px solid transparent;
    border-top-color: #888;
    border-bottom: 0;
}

.w-row {
    width: 748px;
    height: 23px;
    line-height: 20px;
    border: 1px solid #ededed;
    border-width: 0 1px 1px 0;
}

.w-row > div {
    padding-left: 6px;
    white-space: nowrap;
}

.w-head > .sorted,
.w-row > div:first-child {
    padding-left: 7px;
}

.w-row.sel {
    line-height: 18px;
    background: #cbcbcb;
    border: 1px dotted #999;
    border-left: 0;
}

.wops {
    display: flex;
    gap: 4px;
    align-items: center;
    padding-bottom: 2px;
}

.wpager {
    border-top: 0;
    height: 27px;
}
```
